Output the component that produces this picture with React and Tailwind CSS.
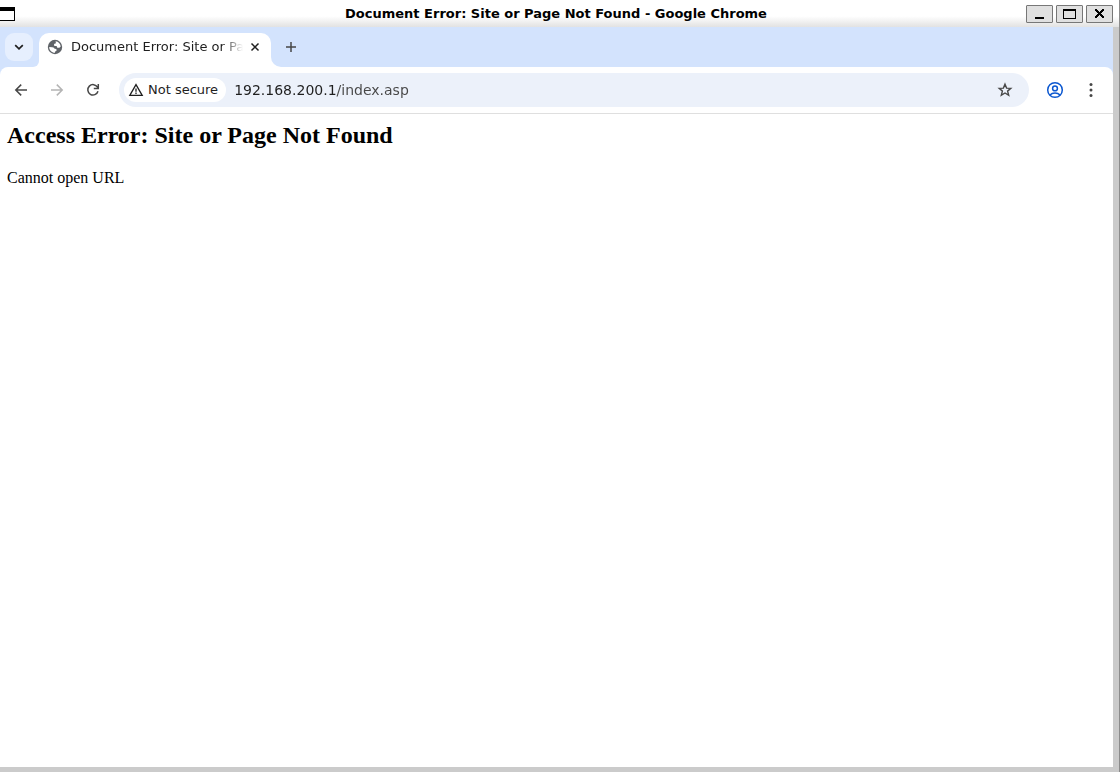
import React from "react";

const strokeProps = {
  fill: "none",
  stroke: "currentColor",
  strokeWidth: 1.5,
};

function WindowControl({ label, children }) {
  return (
    <button
      type="button"
      aria-label={label}
      className="flex h-[18px] w-[27px] items-center justify-center rounded-[1px] border border-[#777777] bg-[#e0e0e0] text-black"
    >
      {children}
    </button>
  );
}

function TitleBar() {
  return (
    <header className="flex h-[27px] items-center rounded-tr-md bg-linear-to-b from-white from-60% to-[#e2e2e2] pr-[6px]">
      <button type="button" aria-label="Window menu" className="flex w-[86px] items-center">
        <svg width="15" height="14" viewBox="0 0 15 14" shapeRendering="crispEdges">
          <path d="M0 0H15V14H0V13H14V4H0Z" fill="#000" />
          <path d="M0 4H14V13H0Z" fill="#fff" />
        </svg>
      </button>
      <h1 className="flex-1 text-center text-[13px] leading-[27px] font-bold text-black">
        Document Error: Site or Page Not Found - Google Chrome
      </h1>
      <div className="flex gap-[3px]">
        <WindowControl label="Minimize">
          <svg width="13" height="10" viewBox="0 0 13 10" shapeRendering="crispEdges">
            <path d="M2 8h9v2H2z" fill="currentColor" />
          </svg>
        </WindowControl>
        <WindowControl label="Maximize">
          <svg width="13" height="10" viewBox="0 0 13 10" shapeRendering="crispEdges">
            <path d="M0 0h13v10H0zM1 2v7h11V2z" fill="currentColor" fillRule="evenodd" />
          </svg>
        </WindowControl>
        <WindowControl label="Close">
          <svg width="9" height="9" viewBox="0 0 9 9" shapeRendering="crispEdges">
            <path
              d="M0 0h2v1h1v1h1v1h1V2h1V1h1V0h2v2H8v1H7v1H6v1h1v1h1v1h1v2H7V8H6V7H5V6H4v1H3v1H2v1H0V7h1V6h1V5h1V4H2V3H1V2H0z"
              fill="currentColor"
            />
          </svg>
        </WindowControl>
      </div>
    </header>
  );
}

function TabStrip() {
  return (
    <div className="flex h-10 items-end bg-[#d3e3fd] pl-[5px]">
      <button
        type="button"
        aria-label="Search tabs"
        className="mb-[6px] flex size-7 items-center justify-center rounded-[9px] bg-[#e6effe] text-[#1f1f1f]"
      >
        <svg width="10" height="10" viewBox="0 0 10 10" {...strokeProps} strokeWidth="1.7">
          <path d="M1.2 3.2 5 6.9 8.8 3.2" />
        </svg>
      </button>
      <div className="h-2 w-[6px] overflow-hidden bg-white">
        <div className="h-full rounded-br-lg bg-[#d3e3fd]" />
      </div>
      <div className="flex h-[34px] w-[232px] items-center rounded-t-[10px] bg-white pr-2 pb-[6px] pl-2">
        <svg width="16" height="16" viewBox="0 0 16 16" className="shrink-0">
          <circle cx="8" cy="8" r="7.2" fill="#5f6368" />
          <path
            d="M8.6 2.3C11.4 2.6 13.4 4.8 13.7 7.6L12.4 8.8 10.3 8.7 9.6 7.1 7.3 6.9 7 5.1 8.9 4.3ZM2.2 8 5.2 8.2C6.8 8.3 7.4 8.9 7.5 9.8L9.3 10.1 9.7 11.4 8.2 12.4 7.9 13.8C4.7 13.7 2.2 11.2 2.2 8Z"
            fill="#fff"
          />
        </svg>
        <span className="ml-2 flex-1 overflow-hidden mask-r-from-88% mask-r-to-100% text-[13px] leading-5 whitespace-nowrap text-[#1f1f1f]">
          Document Error: Site or Page Not Found
        </span>
        <button
          type="button"
          aria-label="Close tab"
          className="ml-1 flex size-4 shrink-0 items-center justify-center text-[#1f1f1f]"
        >
          <svg width="10" height="10" viewBox="0 0 10 10" {...strokeProps}>
            <path d="M1.5 1.5 8.5 8.5M8.5 1.5 1.5 8.5" />
          </svg>
        </button>
      </div>
      <div className="size-[10px] overflow-hidden bg-white">
        <div className="h-full rounded-bl-[10px] bg-[#d3e3fd]" />
      </div>
      <button
        type="button"
        aria-label="New tab"
        className="mb-[10px] flex size-5 items-center justify-center text-[#474747]"
      >
        <svg width="12" height="12" viewBox="0 0 12 12" {...strokeProps}>
          <path d="M6 1V11M1 6H11" />
        </svg>
      </button>
    </div>
  );
}

function ToolButton({ label, className, children }) {
  return (
    <button
      type="button"
      aria-label={label}
      className={"flex h-9 w-9 shrink-0 items-center justify-center " + className}
    >
      {children}
    </button>
  );
}

function Toolbar() {
  return (
    <div className="bg-[#d3e3fd]">
      <div className="flex h-[47px] items-center rounded-t-lg border-b border-[#dfdfdf] bg-white pr-1 pl-[3px]">
        <ToolButton label="Back" className="text-[#474747]">
          <svg width="16" height="16" viewBox="0 0 16 16" {...strokeProps}>
            <path d="M14 8H3M8.2 2.6 2.8 8 8.2 13.4" />
          </svg>
        </ToolButton>
        <ToolButton label="Forward" className="text-[#b4b4b4]">
          <svg width="16" height="16" viewBox="0 0 16 16" {...strokeProps}>
            <path d="M2 8H13M7.8 2.6 13.2 8 7.8 13.4" />
          </svg>
        </ToolButton>
        <ToolButton label="Reload" className="text-[#474747]">
          <svg width="16" height="16" viewBox="0 0 16 16" {...strokeProps}>
            <path d="M13 9.3A5.2 5.2 0 1 1 12.5 5.2L13.2 6.4M13.3 2V6.5H8.8" />
          </svg>
        </ToolButton>
        <div className="ml-2 flex h-[34px] flex-1 items-center rounded-full bg-[#ecf1fa] px-[5px]">
          <button
            type="button"
            className="flex h-6 items-center gap-1 rounded-full bg-white pr-2 pl-1 text-[13px] leading-6 whitespace-nowrap text-[#1f1f1f]"
          >
            <svg width="16" height="16" viewBox="0 0 16 16" {...strokeProps} strokeWidth="1.3">
              <path d="M8 2.6 14.2 13.3H1.8Z" />
              <path d="M8 6.6V9.8M8 10.6V11.9" />
            </svg>
            Not secure
          </button>
          <input
            type="text"
            aria-label="Address"
            defaultValue="192.168.200.1/index.asp"
            className="ml-2 h-6 min-w-0 flex-1 bg-linear-to-r from-[#1f1f1f] from-[102px] to-[#474747] to-[102px] bg-clip-text text-sm text-transparent caret-black outline-none"
          />
          <button
            type="button"
            aria-label="Bookmark this page"
            className="mr-[11px] flex size-4 items-center justify-center text-[#474747]"
          >
            <svg width="16" height="16" viewBox="0 0 16 16" {...strokeProps} strokeWidth="1.4">
              <path d="M8 2.2 9.6 6.1 13.8 6.4 10.6 9.1 11.7 13.3 8 11 4.3 13.3 5.4 9.1 2.2 6.4 6.4 6.1Z" />
            </svg>
          </button>
        </div>
        <ToolButton label="Profile" className="ml-2 text-[#0b57d0]">
          <svg width="18" height="18" viewBox="0 0 18 18" {...strokeProps}>
            <circle cx="9" cy="9" r="7.3" />
            <circle cx="9" cy="7.4" r="2.4" />
            <path d="M3.9 14C6.6 11.4 11.4 11.4 14.1 14" />
          </svg>
        </ToolButton>
        <ToolButton label="Browser menu" className="text-[#474747]">
          <svg width="16" height="16" viewBox="0 0 16 16" fill="currentColor">
            <circle cx="8" cy="2.5" r="1.5" />
            <circle cx="8" cy="8" r="1.5" />
            <circle cx="8" cy="13.5" r="1.5" />
          </svg>
        </ToolButton>
      </div>
    </div>
  );
}

export default function App() {
  return (
    <div className="flex min-h-screen flex-col border-r border-[#8c8c8c] bg-white font-['DejaVu_Sans',sans-serif]">
      <TitleBar />
      <div className="flex flex-1 flex-col border-r-[6px] border-b-[5px] border-[#cbcbcb]">
        <TabStrip />
        <Toolbar />
        <main className="px-[7px] py-[7px] font-['Liberation_Serif',serif] text-black">
          <h2 className="text-2xl leading-7 font-bold">Access Error: Site or Page Not Found</h2>
          <p className="mt-[19px] text-base leading-5">Cannot open URL</p>
        </main>
      </div>
    </div>
  );
}
